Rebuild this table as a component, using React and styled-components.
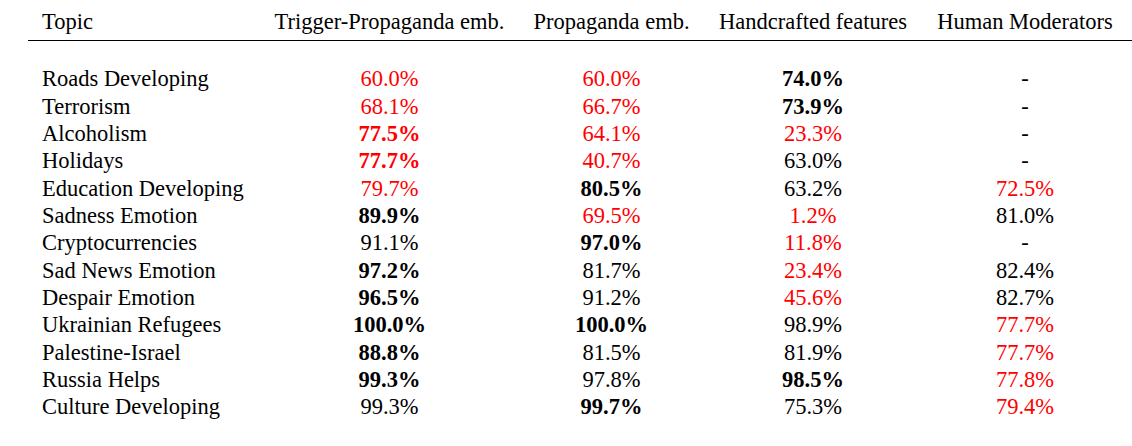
import React from "react";
import styled, { createGlobalStyle } from "styled-components";

const GlobalStyle = createGlobalStyle`
  html, body {
    margin: 0;
    padding: 0;
    background: #fff;
  }
`;

const Page = styled.div`
  padding-left: 28px;
  font-family: "Liberation Serif", "Times New Roman", serif;
  font-size: 22.5px;
  line-height: 27.33px;
  color: #000;
`;

const Grid = styled.div`
  display: grid;
  width: 1104px;
  grid-template-columns: 232px 259px 185px 218px 210px;
`;

const Head = styled.div`
  padding: 8.4px 0 3.8px;
  border-bottom: 1px solid #000;
  text-align: ${({ $left }) => ($left ? "left" : "center")};
  padding-left: ${({ $left }) => ($left ? "14px" : "0")};
  padding-right: ${({ $last }) => ($last ? "4px" : "0")};
  white-space: nowrap;
`;

const Spacer = styled.div`
  grid-column: 1 / -1;
  height: 24.8px;
`;

const Topic = styled.div`
  padding-left: 14px;
  white-space: nowrap;
`;

const Value = styled.div`
  text-align: center;
  padding-right: ${({ $last }) => ($last ? "4px" : "0")};
  color: ${({ $red }) => ($red ? "#ff0000" : "#000")};
  font-weight: ${({ $bold }) => ($bold ? 700 : 400)};
  white-space: nowrap;
`;

const headers = [
  "Topic",
  "Trigger-Propaganda emb.",
  "Propaganda emb.",
  "Handcrafted features",
  "Human Moderators",
];

// r = red, b = bold
const rows = [
  ["Roads Developing", "r:60.0%", "r:60.0%", "b:74.0%", "-"],
  ["Terrorism", "r:68.1%", "r:66.7%", "b:73.9%", "-"],
  ["Alcoholism", "rb:77.5%", "r:64.1%", "r:23.3%", "-"],
  ["Holidays", "rb:77.7%", "r:40.7%", "63.0%", "-"],
  ["Education Developing", "r:79.7%", "b:80.5%", "63.2%", "r:72.5%"],
  ["Sadness Emotion", "b:89.9%", "r:69.5%", "r:1.2%", "81.0%"],
  ["Cryptocurrencies", "91.1%", "b:97.0%", "r:11.8%", "-"],
  ["Sad News Emotion", "b:97.2%", "81.7%", "r:23.4%", "82.4%"],
  ["Despair Emotion", "b:96.5%", "91.2%", "r:45.6%", "82.7%"],
  ["Ukrainian Refugees", "b:100.0%", "b:100.0%", "98.9%", "r:77.7%"],
  ["Palestine-Israel", "b:88.8%", "81.5%", "81.9%", "r:77.7%"],
  ["Russia Helps", "b:99.3%", "97.8%", "b:98.5%", "r:77.8%"],
  ["Culture Developing", "99.3%", "b:99.7%", "75.3%", "r:79.4%"],
];

const parse = (cell) => {
  const i = cell.indexOf(":");
  if (i < 0) return { text: cell, flags: "" };
  return { text: cell.slice(i + 1), flags: cell.slice(0, i) };
};

const App = () => {
  return (
    <Page>
      <GlobalStyle />
      <Grid>
        {headers.map((h, i) => (
          <Head key={h} $left={i === 0} $last={i === headers.length - 1}>
            {h}
          </Head>
        ))}
        <Spacer />
        {rows.map(([topic, ...cells]) => (
          <React.Fragment key={topic}>
            <Topic>{topic}</Topic>
            {cells.map((c, i) => {
              const { text, flags } = parse(c);
              return (
                <Value
                  key={i}
                  $red={flags.includes("r")}
                  $bold={flags.includes("b")}
                  $last={i === cells.length - 1}
                >
                  {text}
                </Value>
              );
            })}
          </React.Fragment>
        ))}
      </Grid>
    </Page>
  );
};

export default App;
